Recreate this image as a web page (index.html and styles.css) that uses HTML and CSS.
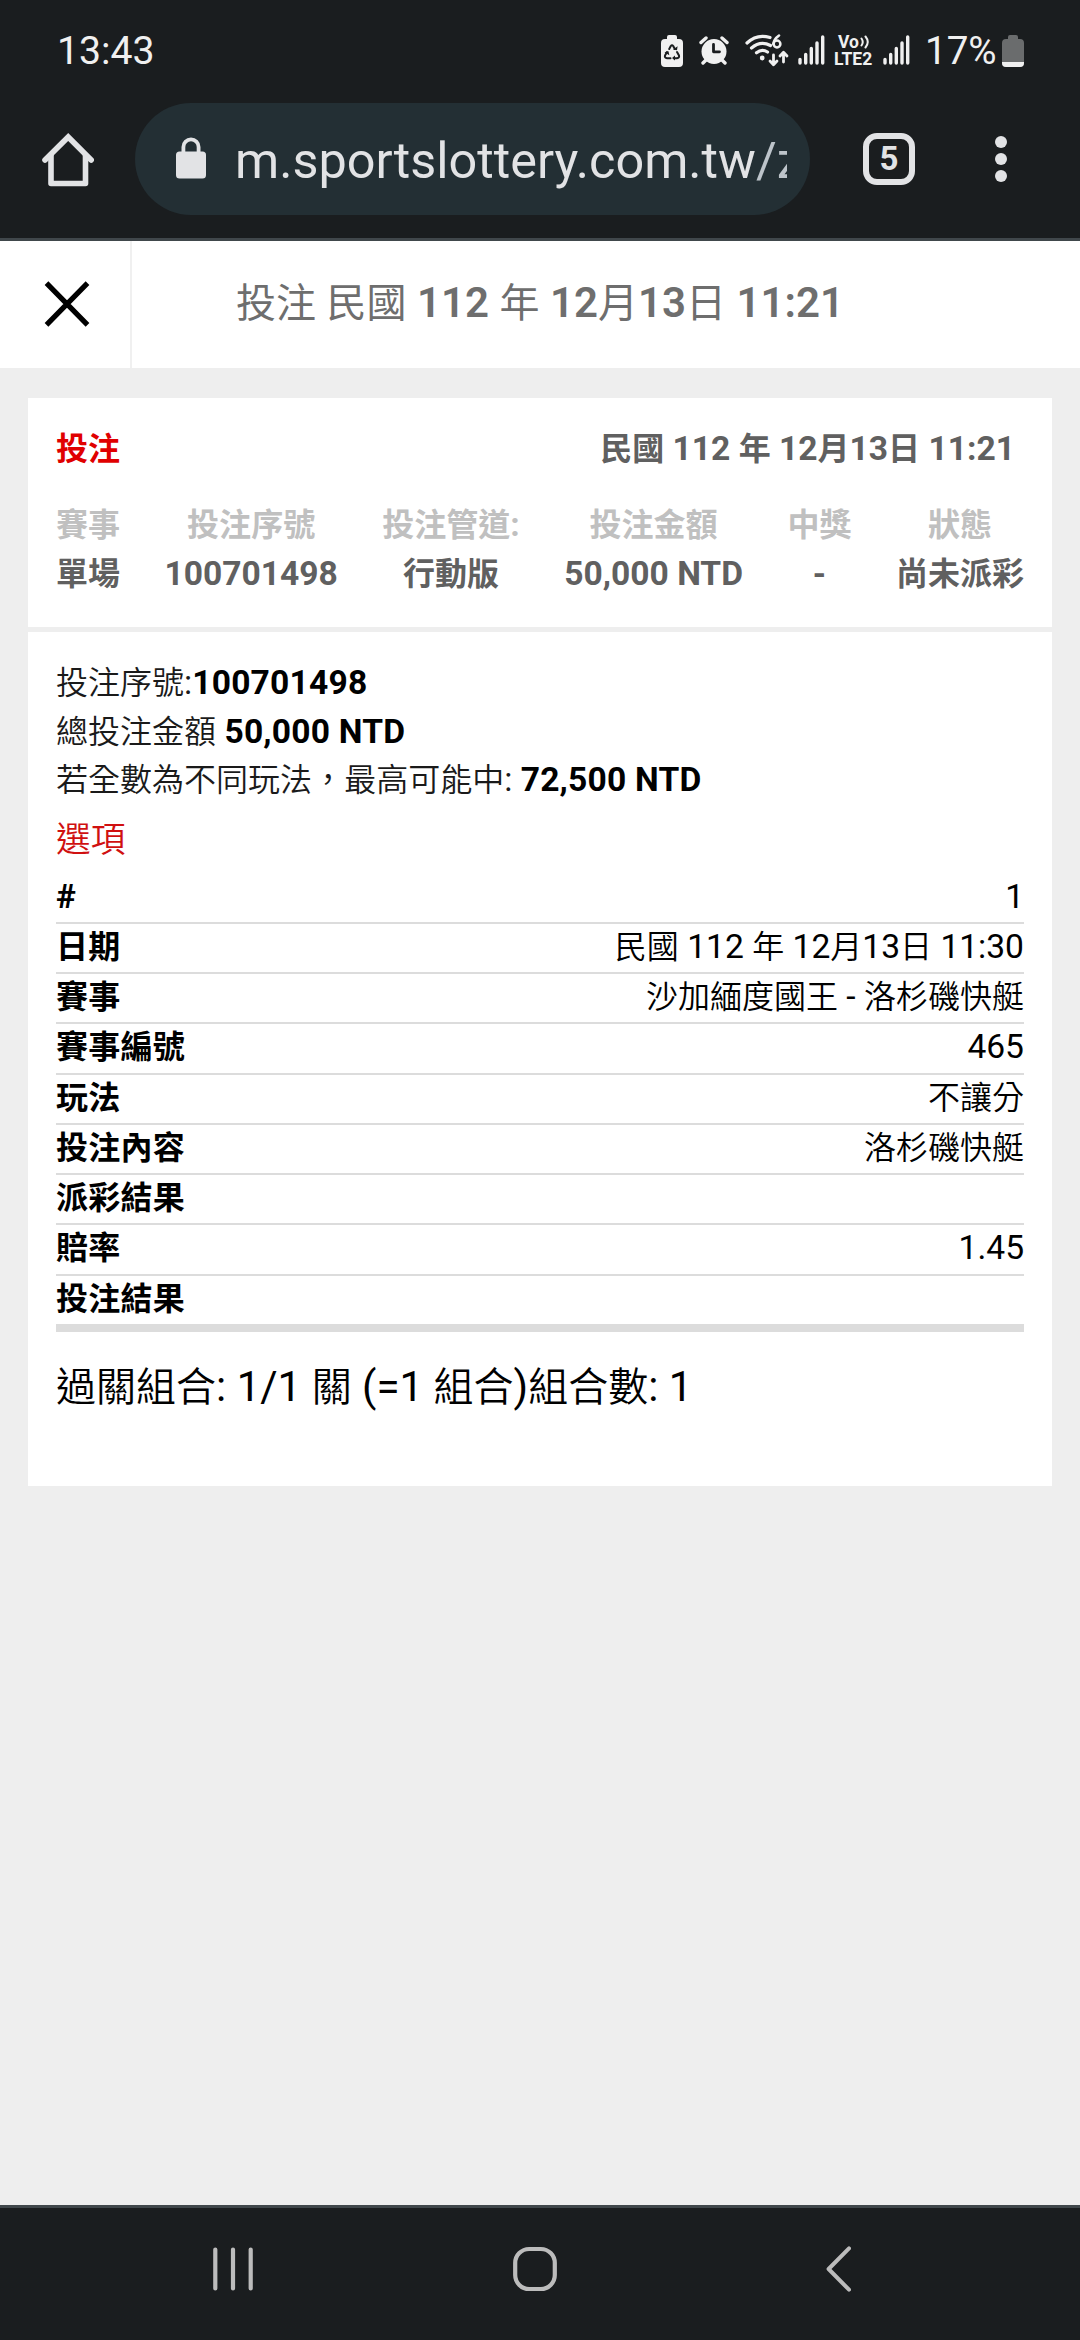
FILE: index.html
```html
<!DOCTYPE html>
<html lang="zh-Hant">
<head>
    <meta charset="UTF-8" />
    <meta name="viewport" content="width=device-width, initial-scale=1.0"/>
    <title>投注</title>
    <link rel="stylesheet" href="styles.css">
</head>
<body>
<div class="status-bar">
    <span class="clock">13:43</span>
    <div class="status-icons">
        <svg class="icon-saver" width="22" height="32" viewBox="0 0 22 32">
            <path fill="#f0f0f0" d="M6 4V2a2 2 0 0 1 2-2h6a2 2 0 0 1 2 2v2h2a4 4 0 0 1 4 4v20a4 4 0 0 1-4 4H4a4 4 0 0 1-4-4V8a4 4 0 0 1 4-4z"/>
            <path fill="none" stroke="#1a1d1f" stroke-width="2" stroke-linejoin="round" stroke-linecap="round" d="M8.200 14l1.600-3q1.200-1.600 2.400 0l1.600 3M16 17l2 3.500q.6 2.500-2 2.700h-3M9.500 23.200H6q-2.600-.2-2-2.700L6 17"/>
            <path fill="#1a1d1f" d="M12 14.500l4 .8.600-4zM14 20.500v5l-3-2.500zM3.500 17.200l4-1 .8 4z"/>
        </svg>
        <svg class="icon-alarm" width="30" height="30" viewBox="0 0 30 30">
            <circle cx="15" cy="15.500" r="12.500" fill="#f0f0f0"/>
            <path fill="none" stroke="#f0f0f0" stroke-width="3.400" stroke-linecap="round" d="M2 6.500L7 2M28 6.500L23 2M7 24l-3 3M23 24l3 3"/>
            <path fill="none" stroke="#1a1d1f" stroke-width="2.800" stroke-linecap="round" stroke-linejoin="round" d="M14.500 8.500v7.300h6"/>
        </svg>
        <svg class="icon-wifi" width="44" height="33" viewBox="0 0 44 33">
            <g fill="none" stroke="#f0f0f0" stroke-width="3.200" stroke-linecap="round">
                <path d="M2 9Q12-.6 25 3.500"/>
                <path d="M6.500 14Q15.500 6.200 25.500 11.500"/>
                <path d="M11.500 18.800Q17 14.200 22.500 18"/>
            </g>
            <circle cx="17.200" cy="24" r="2.400" fill="#f0f0f0"/>
            <path fill="none" stroke="#f0f0f0" stroke-width="2.600" stroke-linecap="round" d="M34 1.500Q29 5 28.300 10"/>
            <circle cx="32" cy="10" r="3.400" fill="none" stroke="#f0f0f0" stroke-width="2.500"/>
            <path fill="none" stroke="#f0f0f0" stroke-width="2.800" stroke-linecap="round" stroke-linejoin="round" d="M28.500 21v9.500m-3.500-3.500l3.500 3.800 3.500-3.800M38.500 28v-9.500m-3.500 3.500l3.500-3.800 3.500 3.800"/>
        </svg>
        <svg class="icon-signal" width="27" height="30" viewBox="0 0 27 30">
            <path stroke="#f0f0f0" stroke-width="3.400" stroke-linecap="round" d="M2 24.500V28M7.700 19.500V28M13.300 13.500V28M19 8V28M24.700 2V28"/>
        </svg>
        <div class="volte">
            <span class="volte-top">Vo<svg width="11" height="14" viewBox="0 0 11 14"><path fill="none" stroke="#f0f0f0" stroke-width="2" stroke-linecap="round" d="M1.500 3.500q2.500 3.500 0 7M5.500 1.500q4.500 5.500 0 11"/></svg></span>
            <span class="volte-bottom">LTE2</span>
        </div>
        <svg class="icon-signal" width="27" height="30" viewBox="0 0 27 30">
            <path stroke="#f0f0f0" stroke-width="3.400" stroke-linecap="round" d="M2 24.500V28M7.700 19.500V28M13.300 13.500V28M19 8V28M24.700 2V28"/>
        </svg>
        <span class="battery-level">17%</span>
        <svg class="icon-battery" width="22" height="32" viewBox="0 0 22 32">
            <path fill="#6a6c6d" d="M6 4V2a2 2 0 0 1 2-2h6a2 2 0 0 1 2 2v2h2a4 4 0 0 1 4 4v20a4 4 0 0 1-4 4H4a4 4 0 0 1-4-4V8a4 4 0 0 1 4-4z"/>
            <path fill="#f0f0f0" d="M0 27h22v1a4 4 0 0 1-4 4H4a4 4 0 0 1-4-4z"/>
        </svg>
    </div>
</div>

<div class="toolbar">
    <svg class="home-icon" width="52" height="54" viewBox="0 0 52 54">
        <path fill="none" stroke="#e2e3e5" stroke-width="5.600" stroke-linejoin="round" d="M9 22v28.500h34.500V22"/>
        <path fill="none" stroke="#e2e3e5" stroke-width="5.600" stroke-linecap="round" d="M3 27L26.200 4l23 23"/>
    </svg>
    <div class="omnibox">
        <svg width="30" height="42" viewBox="0 0 30 42">
            <rect x="0" y="14.500" width="30" height="27" rx="3.500" fill="#e2e3e5"/>
            <path fill="none" stroke="#e2e3e5" stroke-width="3.800" d="M7.400 16V10a7.600 7.600 0 0 1 15.200 0v6"/>
        </svg>
        <div class="url">m.sportslottery.com.tw<span class="path">/z</span></div>
    </div>
    <div class="tab-count">5</div>
    <svg class="menu-icon" width="12" height="46" viewBox="0 0 12 46">
        <g fill="#e2e3e5"><circle cx="6" cy="6" r="6"/><circle cx="6" cy="23" r="6"/><circle cx="6" cy="40" r="6"/></g>
    </svg>
</div>

<div class="page-header">
    <div class="close">
        <svg width="46" height="46" viewBox="0 0 46 46">
            <path stroke="#000" stroke-width="5.200" d="M2.500 2.200L43.500 43.800M43.500 2.200L2.500 43.800"/>
        </svg>
    </div>
    <h1><span class="zh">投注</span> <span class="zh">民國</span> 112 <span class="zh">年</span> 12<span class="zh">月</span>13<span class="zh">日</span> 11:21</h1>
</div>

<div class="content">
    <div class="card summary">
        <div class="summary-head">
            <span class="type"><span class="zh">投注</span></span>
            <span><span class="zh">民國</span> 112 <span class="zh">年</span> 12<span class="zh">月</span>13<span class="zh">日</span> 11:21</span>
        </div>
        <div class="summary-grid">
            <div class="cell"><div class="label"><span class="zh">賽事</span></div><div><span class="zh">單場</span></div></div>
            <div class="cell"><div class="label"><span class="zh">投注序號</span></div><div>100701498</div></div>
            <div class="cell"><div class="label"><span class="zh">投注管道</span>:</div><div><span class="zh">行動版</span></div></div>
            <div class="cell"><div class="label"><span class="zh">投注金額</span></div><div>50,000 NTD</div></div>
            <div class="cell"><div class="label"><span class="zh">中獎</span></div><div>-</div></div>
            <div class="cell"><div class="label"><span class="zh">狀態</span></div><div><span class="zh">尚未派彩</span></div></div>
        </div>
    </div>

    <div class="card details">
        <div class="line"><span class="zh">投注序號</span>:<b>100701498</b></div>
        <div class="line"><span class="zh">總投注金額</span> <b>50,000 NTD</b></div>
        <div class="line"><span class="zh">若全數為不同玩法，最高可能中</span>: <b>72,500 NTD</b></div>
        <h2><span class="zh">選項</span></h2>
        <div class="rows">
            <div class="row"><b>#</b><span>1</span></div>
            <div class="row"><b><span class="zh">日期</span></b><span><span class="zh">民國</span> 112 <span class="zh">年</span> 12<span class="zh">月</span>13<span class="zh">日</span> 11:30</span></div>
            <div class="row"><b><span class="zh">賽事</span></b><span><span class="zh">沙加緬度國王</span> - <span class="zh">洛杉磯快艇</span></span></div>
            <div class="row"><b><span class="zh">賽事編號</span></b><span>465</span></div>
            <div class="row"><b><span class="zh">玩法</span></b><span><span class="zh">不讓分</span></span></div>
            <div class="row"><b><span class="zh">投注內容</span></b><span><span class="zh">洛杉磯快艇</span></span></div>
            <div class="row"><b><span class="zh">派彩結果</span></b><span></span></div>
            <div class="row"><b><span class="zh">賠率</span></b><span>1.45</span></div>
            <div class="row"><b><span class="zh">投注結果</span></b><span></span></div>
        </div>
        <div class="combo"><span class="zh">過關組合</span>: 1/1 <span class="zh">關</span> (=1 <span class="zh">組合</span>)<span class="zh">組合數</span>: 1</div>
    </div>
</div>

<div class="nav-bar">
    <svg width="40" height="46" viewBox="0 0 40 46">
        <path stroke="#bcbcbc" stroke-width="4.200" stroke-linecap="round" d="M2.300 3.500v39M20 3.500v39M37.700 3.500v39"/>
    </svg>
    <svg width="44" height="46" viewBox="0 0 44 46">
        <rect x="2.200" y="3" width="39.600" height="40" rx="14" fill="none" stroke="#bcbcbc" stroke-width="4.200"/>
    </svg>
    <svg width="25" height="46" viewBox="0 0 25 46">
        <path fill="none" stroke="#bcbcbc" stroke-width="4" stroke-linecap="round" stroke-linejoin="round" d="M23 2.300L2.600 23 23 43.700"/>
    </svg>
</div>
</body>
</html>
```

FILE: styles.css
```css
* {
    box-sizing: border-box;
    margin: 0;
    padding: 0;
}

body {
    display: flex;
    flex-direction: column;
    width: 1080px;
    height: 2340px;
    overflow: hidden;
    background-color: #eee;
    font-family: Roboto, "Noto Sans CJK TC", sans-serif;
    font-size: 33.6px;
    color: #000;
}

svg {
    display: block;
    flex-shrink: 0;
}

b {
    letter-spacing: 0.2px;
}

/* Chinese glyphs run slightly smaller than the digits next to them */
.zh {
    font-size: 0.953em;
    line-height: 0;
}

.status-bar {
    display: flex;
    justify-content: space-between;
    height: 103px;
    padding: 0 56px 0 57px;
    background-color: #1a1d1f;
    color: #f0f0f0;
    font-size: 39.2px;
    line-height: 102px;
}

.status-icons {
    display: flex;
    align-items: flex-start;
}

.icon-saver,
.icon-battery {
    margin-top: 35px;
}

.icon-alarm {
    margin: 36px 0 0 16px;
}

.icon-wifi {
    margin: 34px 0 0 16px;
}

.icon-signal {
    margin: 35px 0 0 9px;
}

.volte {
    display: flex;
    flex-direction: column;
    width: 40px;
    margin: 34px 0 0 9px;
    font-size: 17.5px;
    font-weight: 700;
    line-height: 17px;
}

.volte-top {
    display: flex;
    padding-left: 4px;
}

.volte-top svg {
    margin: 1px 0 0 1px;
}

.battery-level {
    width: 70px;
    margin: 0 7px 0 15px;
    font-size: 38.6px;
}

.toolbar {
    display: flex;
    align-items: flex-start;
    height: 138px;
    padding-left: 42px;
    border-bottom: 3px solid #40474b;
    background-color: #1a1d1f;
}

.home-icon {
    margin-top: 30px;
}

.omnibox {
    display: flex;
    width: 675px;
    height: 112px;
    margin-left: 41px;
    padding: 34px 23px 0 41px;
    border-radius: 56px;
    background-color: #232f34;
}

.url {
    flex: 1;
    margin: -34px 0 0 29px;
    overflow: hidden;
    white-space: nowrap;
    color: #e2e3e5;
    font-size: 50.4px;
    line-height: 116px;
}

.url .path {
    color: #bdc4ca;
}

.tab-count {
    width: 52px;
    height: 52px;
    margin: 30px 0 0 53px;
    border: 6px solid #e2e3e5;
    border-radius: 14px;
    color: #e2e3e5;
    font-size: 33px;
    font-weight: 700;
    line-height: 39px;
    text-align: center;
}

.menu-icon {
    margin: 33px 0 0 80px;
}

.page-header {
    display: flex;
    height: 127px;
    background-color: #fff;
}

.close {
    width: 132px;
    padding: 40px 0 0 44px;
    border-right: 2px solid #f0f0f0;
}

.page-header h1 {
    flex: 1;
    padding-right: 132px;
    color: #6e6e6e;
    font-size: 42px;
    font-weight: 600;
    line-height: 124px;
    text-align: center;
}

.page-header .zh {
    font-weight: 400;
}

.content {
    display: flex;
    flex: 1;
    flex-direction: column;
    gap: 5px;
    padding: 30px 28px 0;
}

.card {
    padding: 0 28px;
    background-color: #fff;
}

.summary {
    height: 229px;
    color: #606060;
    font-weight: 700;
}

.summary-head {
    display: flex;
    justify-content: space-between;
    padding: 27px 9px 0 0;
    line-height: 48px;
}

.type {
    color: #e00000;
}

.summary-grid {
    display: flex;
    justify-content: space-between;
    margin-top: 28px;
    line-height: 48.5px;
    text-align: center;
    white-space: nowrap;
}

.label {
    color: #c0c0c0;
}

.details {
    height: 854px;
    padding-top: 27px;
}

.details .line .zh,
.details h2 .zh,
.details .row > span .zh,
.combo .zh {
    font-weight: 350;
}

.line {
    color: #1a1a1a;
    line-height: 48.5px;
}

.line b {
    color: #000;
}

.details h2 {
    color: #d01010;
    font-size: 36.4px;
    font-weight: 400;
    line-height: 69px;
}

.row {
    display: flex;
    justify-content: space-between;
    height: 50.25px;
    padding-top: 1px;
    border-bottom: 2px solid #dcdcdc;
    line-height: 44px;
}

.row:last-child {
    height: 56.5px;
    border-bottom-width: 8px;
}

.combo {
    padding-top: 30px;
    font-size: 42px;
    line-height: 50px;
}

.nav-bar {
    display: flex;
    gap: 260px;
    height: 135px;
    padding: 38px 0 0 213px;
    border-top: 3px solid #40474b;
    background-color: #1a1d1f;
}

.nav-bar svg:last-child {
    margin-left: 9px;
}
```
